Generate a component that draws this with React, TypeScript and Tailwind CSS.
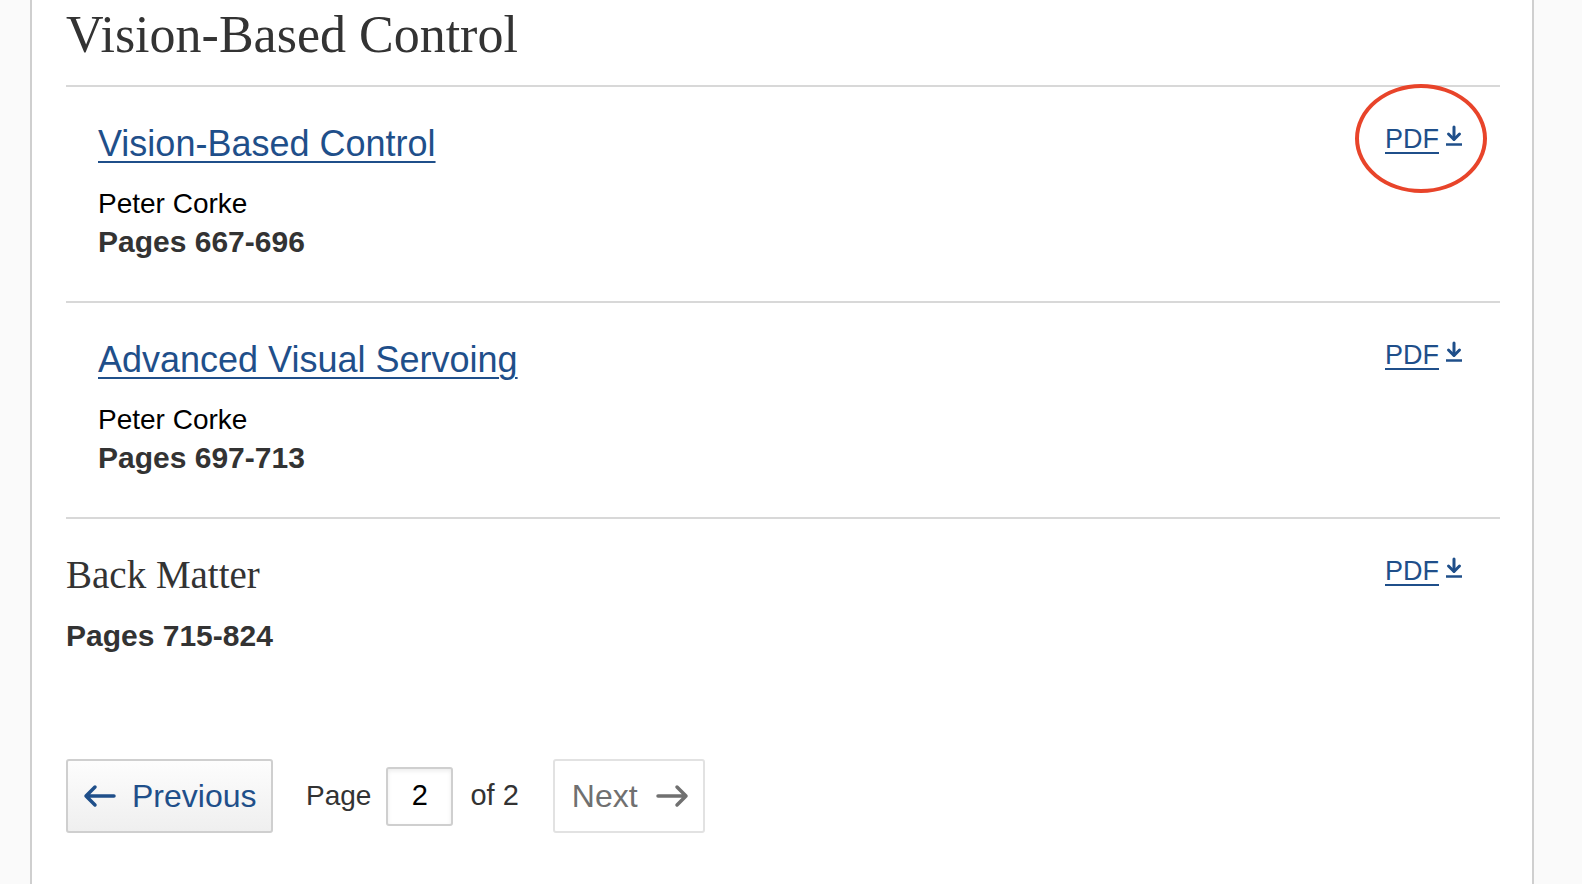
import React from "react";

const Download = () => (
  <svg width="18" height="22" viewBox="0 0 18 22" className="shrink-0" aria-hidden>
    <path d="M9 2 V14" stroke="#1f4f8a" strokeWidth="3" fill="none" strokeLinecap="round" />
    <path d="M3.5 9 L9 14.5 L14.5 9" stroke="#1f4f8a" strokeWidth="3" fill="none" strokeLinecap="round" strokeLinejoin="round" />
    <path d="M1 19.5 H17" stroke="#1f4f8a" strokeWidth="2.5" fill="none" />
  </svg>
);

const Pdf = () => (
  <a className="flex items-start gap-[6px] text-[27px] leading-[30px] text-[#1f4f8a] whitespace-nowrap">
    <span className="underline decoration-2 underline-offset-[4px]">PDF</span>
    <span className="pt-[1px]">
      <Download />
    </span>
  </a>
);

const Chapter = ({ title, pages }: { title: string; pages: string }) => (
  <div className="flex items-start justify-between border-t-2 border-[#d8d8d8] pt-[37px] pb-[40px] pl-[32px] pr-[37px]">
    <div>
      <a className="block text-[36px] leading-[40px] text-[#1f4f8a] underline decoration-2 underline-offset-[5px]">
        {title}
      </a>
      <div className="mt-[21px] text-[28px] leading-[38px] text-black">Peter Corke</div>
      <div className="text-[30px] leading-[38px] font-bold text-[#333]">{pages}</div>
    </div>
    <Pdf />
  </div>
);

export default function App() {
  return (
    <div className="relative flex w-[1582px] h-[884px] overflow-hidden bg-[#fafafa] font-['Liberation_Sans',Arial,sans-serif]">
      <div className="w-[30px] shrink-0" />
      <div className="w-[1504px] shrink-0 bg-white border-x-2 border-[#cfcfcf] pl-[34px] pr-[32px]">
        <h1 className="pt-[9px] mb-[24px] font-['Liberation_Serif',Georgia,serif] text-[52px] leading-[52px] font-normal text-[#333]">
          Vision-Based Control
        </h1>
        <Chapter title="Vision-Based Control" pages="Pages 667-696" />
        <Chapter title="Advanced Visual Servoing" pages="Pages 697-713" />
        <div className="flex items-start justify-between border-t-2 border-[#d8d8d8] pt-[34px] pr-[37px]">
          <div>
            <div className="font-['Liberation_Serif',Georgia,serif] text-[39px] leading-[44px] text-[#333]">
              Back Matter
            </div>
            <div className="mt-[20px] text-[30px] leading-[38px] font-bold text-[#333]">Pages 715-824</div>
          </div>
          <div className="pt-[3px]">
            <Pdf />
          </div>
        </div>
        <div className="mt-[104px] flex items-center">
          <button className="flex h-[74px] w-[207px] items-center gap-[16px] rounded-[3px] border-2 border-[#cfcfcf] bg-gradient-to-b from-[#fdfdfd] to-[#efefef] pl-[15px]">
            <svg width="33" height="24" viewBox="0 0 33 24" aria-hidden>
              <path d="M31 12 H3 M12 3 L3 12 L12 21" stroke="#1f4f8a" strokeWidth="3.5" fill="none" strokeLinecap="round" strokeLinejoin="round" />
            </svg>
            <span className="text-[32px] leading-[40px] text-[#1f4f8a]">Previous</span>
          </button>
          <span className="ml-[33px] text-[28px] text-[#333]">Page</span>
          <div className="ml-[15px] flex h-[59px] w-[67px] items-center justify-center rounded-[3px] border-2 border-[#cfcfcf] shadow-[inset_0_2px_4px_rgba(0,0,0,0.08)] text-[29px] text-black">
            2
          </div>
          <span className="ml-[17px] text-[29px] text-[#333]">of 2</span>
          <div className="ml-[34px] flex h-[74px] w-[152px] items-center gap-[18px] rounded-[3px] border-2 border-[#e2e2e2] bg-white pl-[17px]">
            <span className="text-[32px] leading-[40px] text-[#707070]">Next</span>
            <svg width="33" height="24" viewBox="0 0 33 24" aria-hidden>
              <path d="M2 12 H30 M21 3 L30 12 L21 21" stroke="#707070" strokeWidth="3.5" fill="none" strokeLinecap="round" strokeLinejoin="round" />
            </svg>
          </div>
        </div>
      </div>
      <div className="absolute left-[1355px] top-[84px] h-[109px] w-[132px] rounded-[50%] border-[4px] border-[#e8442a]" />
    </div>
  );
}
